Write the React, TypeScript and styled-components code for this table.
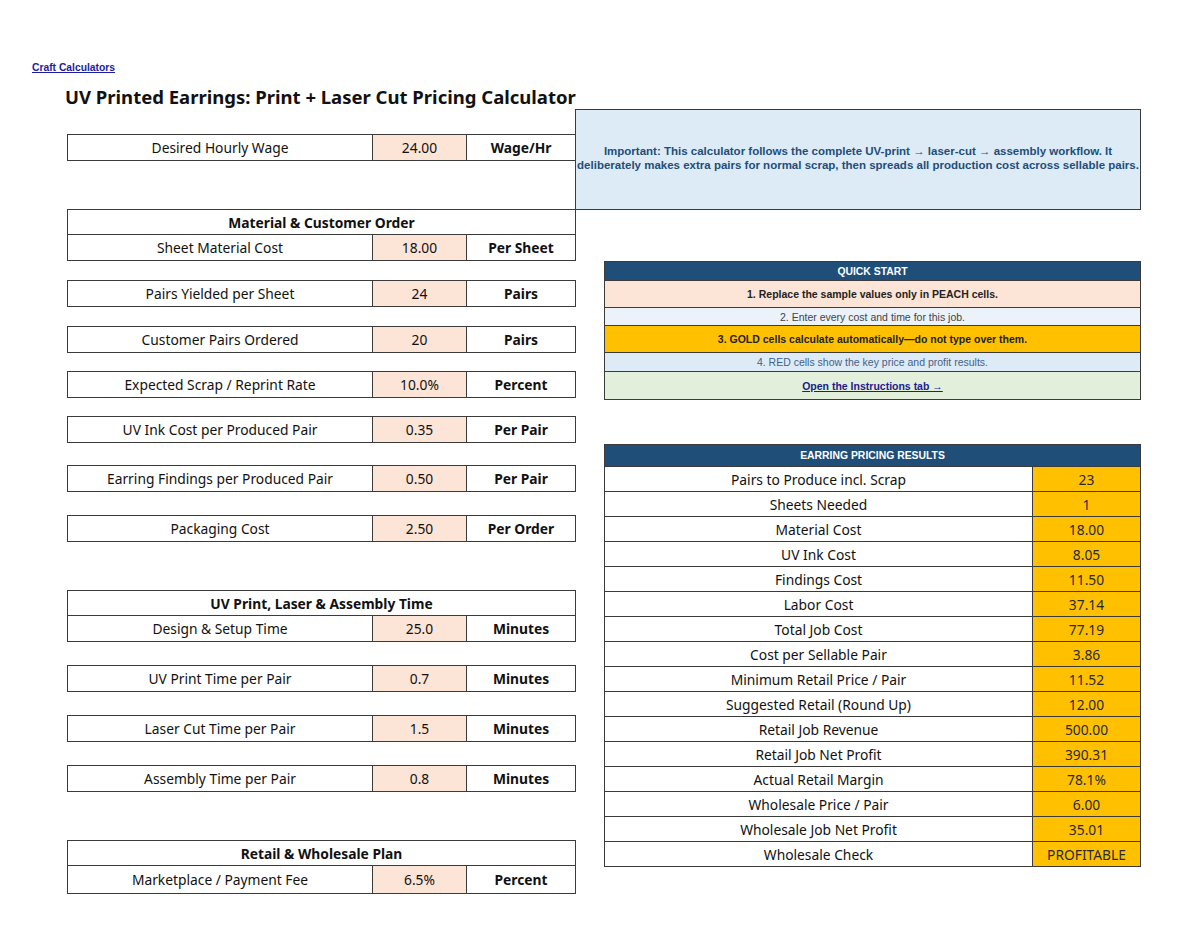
import React from "react";
import styled, { createGlobalStyle } from "styled-components";

const GlobalStyle = createGlobalStyle`
  html, body { margin: 0; padding: 0; background: #ffffff; }
  body { font-family: "Noto Sans", "Open Sans", sans-serif; color: #111; }
  * { box-sizing: border-box; }
`;

const BORDER = "#3b3b3b";
const PEACH = "#FCE4D6";
const GOLD = "#FFC000";
const NAVY = "#1F4E79";

const Page = styled.div`
  width: 1200px;
  min-height: 927px;
  padding: 61px 0 0 32px;
`;

const TopLink = styled.a`
  display: block;
  width: max-content;
  font-family: "Liberation Sans", Arial, sans-serif;
  font-weight: 700;
  font-size: 10.3px;
  line-height: 14px;
  color: #1c1ca0;
  text-decoration: underline;
`;

const Sheet = styled.div`
  display: flex;
  align-items: flex-start;
  margin: 8px 0 0 35px;
`;

const LeftCol = styled.div`
  width: 509px;
  display: flex;
  flex-direction: column;
`;

const RightCol = styled.div`
  width: 566px;
  margin-left: -1px;
  padding-top: 26px;
  display: flex;
  flex-direction: column;
`;

const Title = styled.h1`
  margin: 2px 0 0 -2px;
  font-size: 18.5px;
  line-height: 24px;
  font-weight: 700;
  white-space: nowrap;
  color: #111;
`;

const Block = styled.div<{ $top: number }>`
  margin-top: ${(p) => p.$top}px;
  border: 1px solid ${BORDER};
  background: #fff;
`;

const HeaderRow = styled.div`
  height: 25px;
  display: flex;
  align-items: center;
  justify-content: center;
  font-size: 13.8px;
  font-weight: 700;
  border-bottom: 1px solid ${BORDER};
`;

const InputRow = styled.div<{ $h: number }>`
  display: grid;
  grid-template-columns: 304px 94px 1fr;
  height: ${(p) => p.$h}px;
  font-size: 13.8px;
`;

const Cell = styled.div<{ $bg?: string; $bold?: boolean; $line?: boolean }>`
  display: flex;
  align-items: center;
  justify-content: center;
  white-space: nowrap;
  background: ${(p) => p.$bg || "transparent"};
  font-weight: ${(p) => (p.$bold ? 700 : 400)};
  border-left: ${(p) => (p.$line ? `1px solid ${BORDER}` : "none")};
  color: #111;
`;

const InfoBox = styled.div`
  height: 101px;
  border: 1px solid ${BORDER};
  background: #DDEBF7;
  display: flex;
  flex-direction: column;
  align-items: center;
  justify-content: center;
  font-family: "Liberation Sans", Arial, sans-serif;
  font-weight: 700;
  font-size: 11.5px;
  line-height: 13.5px;
  color: ${NAVY};
  text-align: center;
  padding-bottom: 2px;
`;

const InfoLine = styled.span`
  white-space: nowrap;
`;

const Panel = styled.div<{ $top: number }>`
  margin: ${(p) => p.$top}px 0 0 29px;
  border: 1px solid ${BORDER};
  display: flex;
  flex-direction: column;
`;

const PanelHead = styled.div<{ $h: number; $size: number }>`
  height: ${(p) => p.$h}px;
  background: ${NAVY};
  color: #fff;
  display: flex;
  align-items: center;
  justify-content: center;
  font-family: "Liberation Sans", Arial, sans-serif;
  font-weight: 700;
  font-size: ${(p) => p.$size}px;
`;

const StepRow = styled.div<{ $h: number; $bg: string; $color: string; $bold?: boolean }>`
  height: ${(p) => p.$h}px;
  border-top: 1px solid ${BORDER};
  background: ${(p) => p.$bg};
  color: ${(p) => p.$color};
  display: flex;
  align-items: center;
  justify-content: center;
  font-family: "Liberation Sans", Arial, sans-serif;
  font-weight: ${(p) => (p.$bold ? 700 : 400)};
  font-size: 10.5px;
`;

const StepLink = styled.a`
  color: #1c1c8c;
  text-decoration: underline;
  font-weight: 700;
`;

const ResultRow = styled.div`
  display: grid;
  grid-template-columns: 427px 1fr;
  height: 25px;
  border-top: 1px solid ${BORDER};
  font-size: 13.8px;
`;

const ResultValue = styled(Cell)`
  color: #2a2a2a;
`;

type InputItem = { label: string; value: string; unit: string };
type InputGroup = { top: number; header?: string; h?: number; rows: InputItem[] };

const groups: InputGroup[] = [
  { top: 25, rows: [{ label: "Desired Hourly Wage", value: "24.00", unit: "Wage/Hr" }] },
  {
    top: 48,
    header: "Material & Customer Order",
    rows: [{ label: "Sheet Material Cost", value: "18.00", unit: "Per Sheet" }],
  },
  { top: 19, rows: [{ label: "Pairs Yielded per Sheet", value: "24", unit: "Pairs" }] },
  { top: 19, rows: [{ label: "Customer Pairs Ordered", value: "20", unit: "Pairs" }] },
  { top: 18, rows: [{ label: "Expected Scrap / Reprint Rate", value: "10.0%", unit: "Percent" }] },
  { top: 18, rows: [{ label: "UV Ink Cost per Produced Pair", value: "0.35", unit: "Per Pair" }] },
  { top: 22, rows: [{ label: "Earring Findings per Produced Pair", value: "0.50", unit: "Per Pair" }] },
  { top: 23, rows: [{ label: "Packaging Cost", value: "2.50", unit: "Per Order" }] },
  {
    top: 48,
    header: "UV Print, Laser & Assembly Time",
    rows: [{ label: "Design & Setup Time", value: "25.0", unit: "Minutes" }],
  },
  { top: 23, rows: [{ label: "UV Print Time per Pair", value: "0.7", unit: "Minutes" }] },
  { top: 23, rows: [{ label: "Laser Cut Time per Pair", value: "1.5", unit: "Minutes" }] },
  { top: 23, rows: [{ label: "Assembly Time per Pair", value: "0.8", unit: "Minutes" }] },
  {
    top: 48,
    header: "Retail & Wholesale Plan",
    h: 27,
    rows: [{ label: "Marketplace / Payment Fee", value: "6.5%", unit: "Percent" }],
  },
];

const results: [string, string][] = [
  ["Pairs to Produce incl. Scrap", "23"],
  ["Sheets Needed", "1"],
  ["Material Cost", "18.00"],
  ["UV Ink Cost", "8.05"],
  ["Findings Cost", "11.50"],
  ["Labor Cost", "37.14"],
  ["Total Job Cost", "77.19"],
  ["Cost per Sellable Pair", "3.86"],
  ["Minimum Retail Price / Pair", "11.52"],
  ["Suggested Retail (Round Up)", "12.00"],
  ["Retail Job Revenue", "500.00"],
  ["Retail Job Net Profit", "390.31"],
  ["Actual Retail Margin", "78.1%"],
  ["Wholesale Price / Pair", "6.00"],
  ["Wholesale Job Net Profit", "35.01"],
  ["Wholesale Check", "PROFITABLE"],
];

export default function App() {
  return (
    <>
      <GlobalStyle />
      <Page>
        <TopLink href="#">Craft Calculators</TopLink>
        <Sheet>
          <LeftCol>
            <Title>UV Printed Earrings: Print + Laser Cut Pricing Calculator</Title>
            {groups.map((g, i) => (
              <Block key={i} $top={g.top}>
                {g.header && <HeaderRow>{g.header}</HeaderRow>}
                {g.rows.map((r) => (
                  <InputRow key={r.label} $h={g.h ?? 25}>
                    <Cell>{r.label}</Cell>
                    <Cell $bg={PEACH} $line>
                      {r.value}
                    </Cell>
                    <Cell $bold $line>
                      {r.unit}
                    </Cell>
                  </InputRow>
                ))}
              </Block>
            ))}
          </LeftCol>
          <RightCol>
            <InfoBox>
              <InfoLine>
                Important: This calculator follows the complete UV-print → laser-cut → assembly workflow. It
              </InfoLine>
              <InfoLine>
                deliberately makes extra pairs for normal scrap, then spreads all production cost across sellable pairs.
              </InfoLine>
            </InfoBox>
            <Panel $top={51}>
              <PanelHead $h={18} $size={10.4}>QUICK START</PanelHead>
              <StepRow $h={27} $bg={PEACH} $color="#222" $bold>
                1. Replace the sample values only in PEACH cells.
              </StepRow>
              <StepRow $h={18} $bg="#EBF2F9" $color="#444">
                2. Enter every cost and time for this job.
              </StepRow>
              <StepRow $h={27} $bg={GOLD} $color="#222" $bold>
                3. GOLD cells calculate automatically—do not type over them.
              </StepRow>
              <StepRow $h={19} $bg="#DDEBF7" $color="#44618a">
                4. RED cells show the key price and profit results.
              </StepRow>
              <StepRow $h={28} $bg="#E2EFDA" $color="#1c1c8c">
                <StepLink href="#">Open the Instructions tab →</StepLink>
              </StepRow>
            </Panel>
            <Panel $top={44}>
              <PanelHead $h={21} $size={10.4}>EARRING PRICING RESULTS</PanelHead>
              {results.map(([label, value]) => (
                <ResultRow key={label}>
                  <Cell>{label}</Cell>
                  <ResultValue $bg={GOLD} $line>
                    {value}
                  </ResultValue>
                </ResultRow>
              ))}
            </Panel>
          </RightCol>
        </Sheet>
      </Page>
    </>
  );
}
